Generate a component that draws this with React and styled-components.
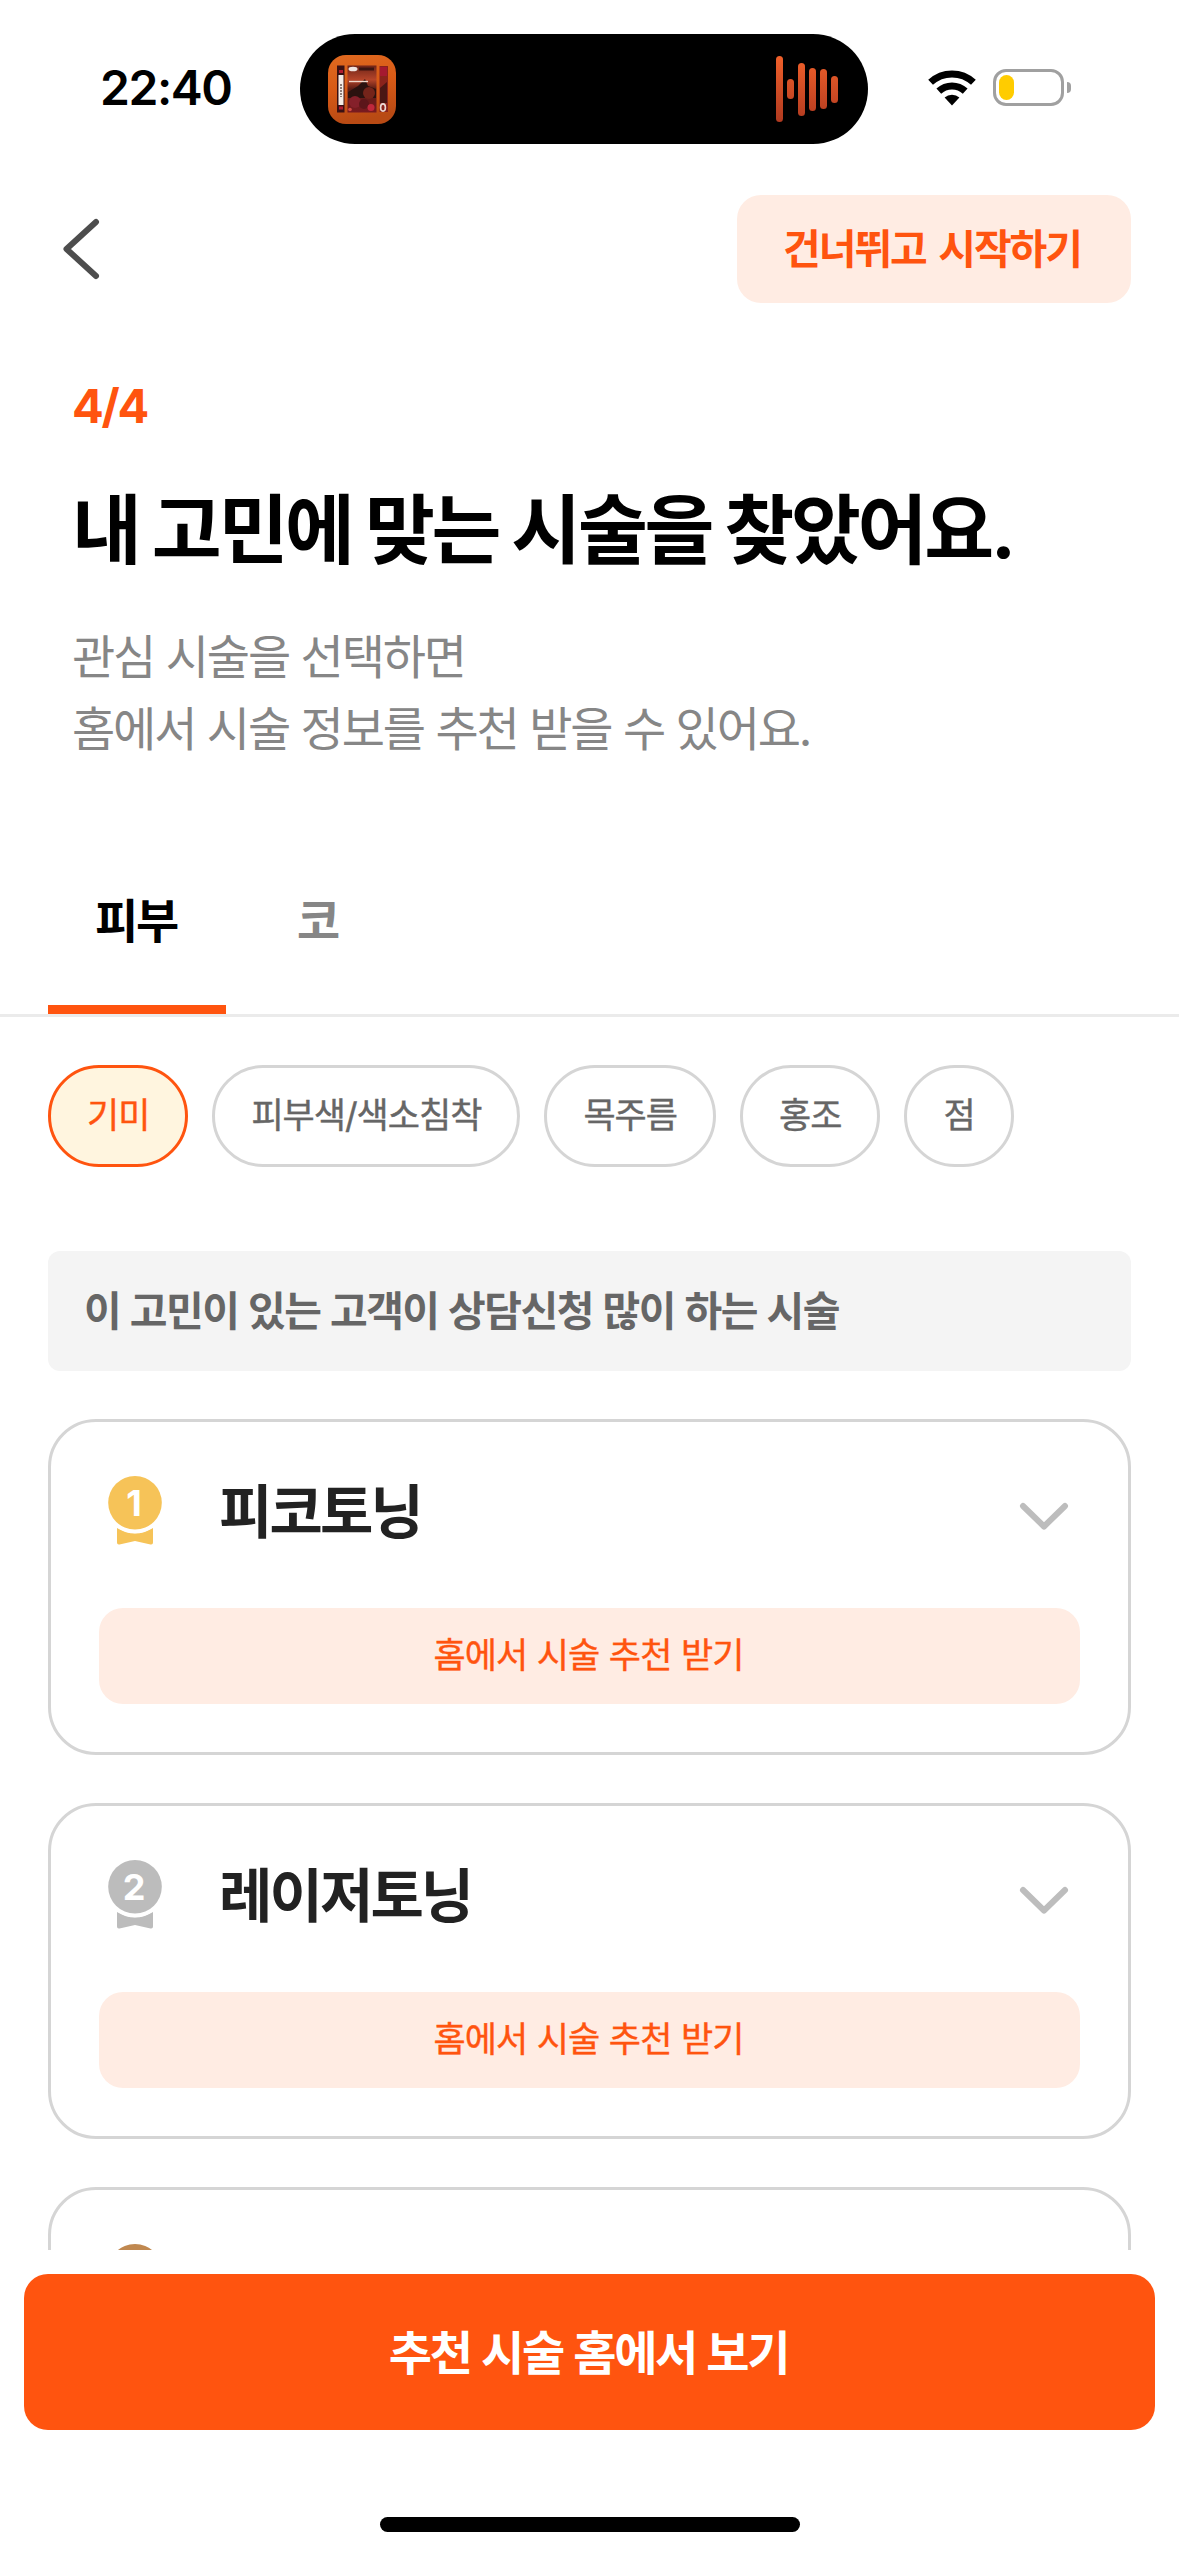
import React from "react";
import styled, { createGlobalStyle } from "styled-components";

const orange = "#ff540f";
const peach = "#ffece3";
const line = "#d5d5d5";

const GlobalStyle = createGlobalStyle`
  * { box-sizing: border-box; }
  body { margin: 0; background: #fff; }
  button { border: 0; margin: 0; padding: 0; background: none; font: inherit; color: inherit; }
  svg { display: block; flex: none; }
`;

const Screen = styled.div`
  width: 1179px;
  height: 2556px;
  display: flex;
  flex-direction: column;
  overflow: hidden;
  background: #fff;
  font-family: Inter, "Noto Sans CJK KR", sans-serif;
  line-height: 1;
  white-space: nowrap;
`;

const StatusBar = styled.header`
  display: flex;
  align-items: center;
  flex: none;
  height: 144px;
  padding: 34px 0 0 100px;
`;

const Time = styled.time`
  width: 200px;
  margin-bottom: 3px;
  font-size: 48px;
  line-height: 60px;
  font-weight: 600;
  letter-spacing: -0.03em;
  color: #000;
`;

const Island = styled.div`
  display: flex;
  align-items: center;
  justify-content: space-between;
  width: 568px;
  height: 110px;
  margin-right: 60px;
  padding: 0 30px 0 28px;
  border-radius: 55px;
  background: #000;
`;

const Wave = styled.div`
  display: flex;
  align-items: center;
  gap: 4px;
`;

const WaveBar = styled.span`
  width: 7px;
  height: ${(p) => p.$h}px;
  border-radius: 4px;
  background: linear-gradient(#f0602a, #b03a20) center / 100% 66px;
`;

const Indicators = styled.div`
  display: flex;
  align-items: center;
  gap: 17px;
  margin-bottom: 3px;
`;

const Battery = styled.div`
  position: relative;
  width: 71px;
  height: 37px;
  padding: 3px;
  border: 3px solid #a0a0a0;
  border-radius: 13px;
  &::after {
    content: "";
    position: absolute;
    right: -10px;
    top: 10px;
    width: 4.5px;
    height: 11px;
    border-radius: 0 5px 5px 0;
    background: #a0a0a0;
  }
`;

const Charge = styled.div`
  width: 15px;
  height: 25px;
  border-radius: 7.5px;
  background: #ffcc00;
`;

const AppBar = styled.nav`
  display: flex;
  align-items: center;
  justify-content: space-between;
  flex: none;
  height: 108px;
  margin-top: 51px;
  padding: 0 48px 0 60px;
`;

const SkipButton = styled.button`
  width: 394px;
  height: 108px;
  padding-right: 4px;
  border-radius: 24px;
  background: ${peach};
  color: ${orange};
  font-size: 41px;
  font-weight: 600;
  letter-spacing: -2px;
  word-spacing: 4px;
`;

const Intro = styled.section`
  flex: none;
  padding: 67px 72px 0;
`;

const Step = styled.p`
  margin: 0;
  font-size: 47px;
  line-height: 72px;
  font-weight: 700;
  letter-spacing: -2.3px;
  color: ${orange};
`;

const Title = styled.h1`
  margin: 38px 0 0;
  font-size: 76px;
  line-height: 100px;
  font-weight: 700;
  letter-spacing: -3.3px;
  word-spacing: -1.5px;
  color: #000;
`;

const Description = styled.p`
  margin: 41px 0 0;
  font-size: 47px;
  line-height: 72px;
  font-weight: 400;
  letter-spacing: -2.15px;
  word-spacing: 0.5px;
  color: #868686;
`;

const Tabs = styled.div`
  display: flex;
  flex: none;
  gap: 24px;
  height: 187px;
  margin-top: 65px;
  padding: 0 48px;
  border-bottom: 3px solid #ebebeb;
`;

const Tab = styled.button`
  height: 184px;
  padding: 5px 48px 0 47px;
  border-bottom: 9px solid ${(p) => (p.$active ? orange : "transparent")};
  font-size: 47px;
  font-weight: 600;
  letter-spacing: -2.2px;
  color: ${(p) => (p.$active ? "#000" : "#868686")};
  &:first-child { padding-right: 49px; }
`;

const Chips = styled.div`
  display: flex;
  flex: none;
  gap: 24px;
  margin-top: 48px;
  padding: 0 48px;
`;

const Chip = styled.button`
  height: 102px;
  padding: 0 36px 1px;
  border: 3px solid ${(p) => (p.$active ? orange : line)};
  border-radius: 51px;
  background: ${(p) => (p.$active ? "#fff5df" : "#fff")};
  color: ${(p) => (p.$active ? orange : "#666")};
  font-size: 35px;
  font-weight: 400;
  letter-spacing: -1px;
  -webkit-text-stroke: 0.4px currentColor;
`;

const Results = styled.main`
  display: flex;
  flex-direction: column;
  gap: 48px;
  flex: 1;
  min-height: 0;
  overflow: hidden;
  margin-top: 84px;
  padding: 0 48px;
`;

const Banner = styled.p`
  flex: none;
  margin: 0;
  padding: 0 36px;
  border-radius: 12px;
  background: #f4f4f4;
  color: #666;
  font-size: 41px;
  line-height: 120px;
  font-weight: 600;
  letter-spacing: -1.5px;
  word-spacing: 0.7px;
`;

const Card = styled.article`
  display: flex;
  flex-direction: column;
  justify-content: space-between;
  flex: none;
  height: 336px;
  padding: 48px;
  border: 3px solid ${line};
  border-radius: 48px;
`;

const CardHead = styled.div`
  display: flex;
  align-items: center;
  height: 84px;
`;

const CardTitle = styled.h2`
  flex: 1;
  margin: 0 0 0 48px;
  font-size: 58px;
  line-height: 84px;
  font-weight: 600;
  letter-spacing: -2.9px;
  color: #222;
`;

const CardAction = styled.button`
  height: 96px;
  padding: 0 2px 2px 0;
  border-radius: 24px;
  background: ${peach};
  color: ${orange};
  font-size: 35px;
  font-weight: 400;
  letter-spacing: -0.9px;
  word-spacing: 0.5px;
  -webkit-text-stroke: 0.4px currentColor;
`;

const Footer = styled.footer`
  display: flex;
  flex-direction: column;
  align-items: center;
  flex: none;
  height: 306px;
  padding: 24px 24px 0;
`;

const PrimaryButton = styled.button`
  width: 100%;
  height: 156px;
  padding-right: 2px;
  border-radius: 24px;
  background: ${orange};
  color: #fff;
  font-size: 47px;
  font-weight: 700;
  letter-spacing: -2.3px;
  word-spacing: 1.5px;
`;

const HomeIndicator = styled.div`
  width: 420px;
  height: 15px;
  margin-top: 87px;
  border-radius: 8px;
  background: #000;
`;

const AlbumArt = () => (
  <svg width="68" height="69" viewBox="0 0 68 69">
    <defs>
      <linearGradient id="sleeve" x1="0" y1="0" x2="0.2" y2="1">
        <stop offset="0" stopColor="#e06a20" />
        <stop offset="0.5" stopColor="#d85a16" />
        <stop offset="1" stopColor="#b84a14" />
      </linearGradient>
      <linearGradient id="cover" x1="0" y1="0" x2="0" y2="1">
        <stop offset="0" stopColor="#6e2418" />
        <stop offset="0.3" stopColor="#b5452a" />
        <stop offset="0.5" stopColor="#5a1c14" />
        <stop offset="1" stopColor="#7a1a20" />
      </linearGradient>
    </defs>
    <rect width="68" height="69" rx="18" fill="url(#sleeve)" />
    <rect x="9" y="10.500" width="7.500" height="47" fill="#3a1012" />
    <rect x="10.500" y="20" width="5" height="30" fill="#f4ece6" />
    <path d="M13 29v13" stroke="#6b5a55" strokeWidth="1.500" strokeDasharray="2 1" />
    <path d="M11 16.500h4M11 53h4" stroke="#b01a30" strokeWidth="3" />
    <rect x="19.500" y="10.500" width="29" height="47" fill="url(#cover)" />
    <path d="M31 14h15" stroke="#3c1511" strokeWidth="3" />
    <ellipse cx="25" cy="14" rx="4.500" ry="2.300" fill="#eee3df" />
    <path d="M20 37l10-6 7-7 3 7 8 3v9H20z" fill="#2b120f" />
    <path d="M21 26.500h19" stroke="#f1d9cc" strokeWidth="1.400" />
    <circle cx="41" cy="38" r="6" fill="#74241a" />
    <circle cx="27" cy="47" r="6" fill="#85202a" />
    <circle cx="36" cy="49" r="5" fill="#5c161a" />
    <circle cx="43" cy="52.500" r="3.500" fill="#c0283c" />
    <circle cx="22" cy="54.500" r="1.800" fill="#d24a44" />
    <rect x="51.500" y="11" width="8.500" height="46" fill="#8a231c" />
    <rect x="52" y="12" width="7" height="9" fill="#a51930" />
    <path d="M52 33l7-6v21h-7z" fill="#4a1714" />
    <ellipse cx="55" cy="52.500" rx="2.400" ry="3.600" fill="none" stroke="#ecdcd8" strokeWidth="1.600" />
  </svg>
);

const WifiIcon = () => (
  <svg width="48" height="36" viewBox="0 0 48 36" fill="none" stroke="#000" strokeWidth="7">
    <path d="M2.6 12.3A31.5 31.5 0 0 1 45.4 12.3" />
    <path d="M10.8 21.2A19.5 19.5 0 0 1 37.2 21.2" />
    <path d="M24 35.5L16.6 27.6A11 11 0 0 1 31.4 27.6Z" fill="#000" stroke="none" />
  </svg>
);

const BackIcon = () => (
  <svg width="48" height="66" viewBox="0 0 48 66" fill="none" stroke="#4d4d4d" strokeWidth="6" strokeLinecap="round" strokeLinejoin="round">
    <path d="M36 6L6.5 33L36 60" />
  </svg>
);

const ChevronIcon = () => (
  <svg width="72" height="72" viewBox="0 0 72 72" fill="none" stroke="#bdbdbd" strokeWidth="6" strokeLinecap="round" strokeLinejoin="round">
    <path d="M15 30L36 50.5L57 30" />
  </svg>
);

const Medal = ({ rank, color }) => (
  <svg width="72" height="84" viewBox="0 0 72 84">
    <path d="M18 58Q36 69 54 58V72.500Q54 75 51.500 74.500L36 71L20.500 74.500Q18 75 18 72.500Z" fill={color} />
    <circle cx="36" cy="32.700" r="30.500" fill="#fff" />
    <circle cx="36" cy="32.700" r="26.800" fill={color} />
    {rank && (
      <text x="35" y="45.500" textAnchor="middle" fontFamily="Inter, sans-serif" fontSize="36" fontWeight="700" fill="#fff">
        {rank}
      </text>
    )}
  </svg>
);

const chips = ["기미", "피부색/색소침착", "목주름", "홍조", "점"];
const waveHeights = [66, 20, 53, 43, 40, 27];
const treatments = [
  { rank: 1, name: "피코토닝", color: "#f6c358" },
  { rank: 2, name: "레이저토닝", color: "#bcbcbc" },
];

export default function App() {
  return (
    <Screen>
      <GlobalStyle />
      <StatusBar>
        <Time>22:40</Time>
        <Island>
          <AlbumArt />
          <Wave>
            {waveHeights.map((h, i) => (
              <WaveBar key={i} $h={h} />
            ))}
          </Wave>
        </Island>
        <Indicators>
          <WifiIcon />
          <Battery>
            <Charge />
          </Battery>
        </Indicators>
      </StatusBar>

      <AppBar>
        <BackIcon />
        <SkipButton>건너뛰고 시작하기</SkipButton>
      </AppBar>

      <Intro>
        <Step>4/4</Step>
        <Title>내 고민에 맞는 시술을 찾았어요.</Title>
        <Description>
          관심 시술을 선택하면
          <br />
          홈에서 시술 정보를 추천 받을 수 있어요.
        </Description>
      </Intro>

      <Tabs>
        <Tab $active>피부</Tab>
        <Tab>코</Tab>
      </Tabs>

      <Chips>
        {chips.map((label, i) => (
          <Chip key={label} $active={i === 0}>
            {label}
          </Chip>
        ))}
      </Chips>

      <Results>
        <Banner>이 고민이 있는 고객이 상담신청 많이 하는 시술</Banner>
        {treatments.map(({ rank, name, color }) => (
          <Card key={rank}>
            <CardHead>
              <Medal rank={rank} color={color} />
              <CardTitle>{name}</CardTitle>
              <ChevronIcon />
            </CardHead>
            <CardAction>홈에서 시술 추천 받기</CardAction>
          </Card>
        ))}
        <Card>
          <CardHead>
            <Medal color="#c08850" />
          </CardHead>
        </Card>
      </Results>

      <Footer>
        <PrimaryButton>추천 시술 홈에서 보기</PrimaryButton>
        <HomeIndicator />
      </Footer>
    </Screen>
  );
}
